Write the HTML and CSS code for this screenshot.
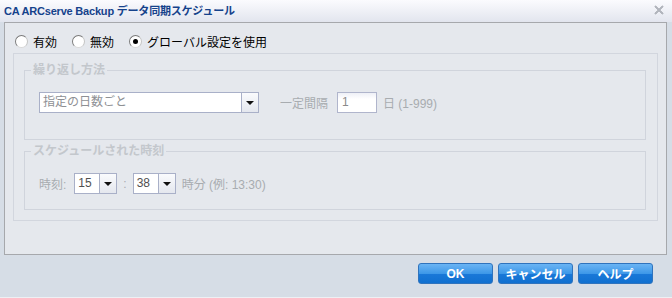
FILE: index.html
```html
<!DOCTYPE html>
<html lang="ja">
<head>
  <meta charset="UTF-8">
  <title>CA ARCserve Backup データ同期スケジュール</title>
  <link rel="stylesheet" href="styles.css">
</head>
<body>
  <div class="window">
    <div class="titlebar">
      <span class="title">CA ARCserve Backup データ同期スケジュール</span>
      <svg class="close" width="10" height="10" viewBox="0 0 10 10">
        <path d="M1 1 L9 9 M9 1 L1 9" stroke="#8a8e96" stroke-width="1.6" fill="none"/>
        <path d="M1 1 L9 9 M9 1 L1 9" stroke="#d8dce4" stroke-width="0.5" fill="none"/>
      </svg>
    </div>

    <div class="panel">
      <div class="radios">
        <label class="radio"><span class="dot"></span>有効</label>
        <label class="radio"><span class="dot"></span>無効</label>
        <label class="radio"><span class="dot checked"></span>グローバル設定を使用</label>
      </div>

      <div class="outer">
        <fieldset class="group">
          <legend>繰り返し方法</legend>
          <div class="row">
            <div class="combo wide">
              <span class="combo-text">指定の日数ごと</span>
              <span class="combo-btn"><i class="arrow"></i></span>
            </div>
            <span class="muted gap-l">一定間隔</span>
            <span class="field">1</span>
            <span class="muted">日 (1-999)</span>
          </div>
        </fieldset>

        <fieldset class="group second">
          <legend>スケジュールされた時刻</legend>
          <div class="row">
            <span class="muted">時刻:</span>
            <div class="combo small hour">
              <span class="combo-text">15</span>
              <span class="combo-btn"><i class="arrow"></i></span>
            </div>
            <span class="muted colon">:</span>
            <div class="combo small">
              <span class="combo-text">38</span>
              <span class="combo-btn"><i class="arrow"></i></span>
            </div>
            <span class="muted">時分 (例: 13:30)</span>
          </div>
        </fieldset>
      </div>
    </div>

    <div class="buttons">
      <button>OK</button>
      <button>キャンセル</button>
      <button>ヘルプ</button>
    </div>
  </div>
</body>
</html>
```

FILE: styles.css
```css
body {
  margin: 0;
  background: #d6dde6;
  font-family: "Liberation Sans", "Noto Sans CJK JP", sans-serif;
  font-size: 12px;
}

.window {
  width: 672px;
  height: 297px;
  border-bottom: 1px solid #eef0f4;
}

.titlebar {
  height: 22px;
  display: flex;
  align-items: center;
  justify-content: space-between;
  padding: 0 8px 0 4px;
  background: linear-gradient(#fbfbfe, #e2e5ee);
}

.title {
  font-weight: bold;
  font-size: 11px;
  letter-spacing: -0.2px;
  color: #15428b;
  margin-top: -2px;
}

.close {
  margin-top: -2px;
}

.panel {
  margin-left: 4px;
  width: 661px;
  height: 231px;
  border: 1px solid #a6a8ac;
  background: #e5e8ed;
}

.radios {
  display: flex;
  align-items: center;
  height: 16px;
  padding: 10px 0 0 10px;
}

.radio {
  display: flex;
  align-items: center;
  margin-right: 15px;
  color: #000;
}

.dot {
  width: 11px;
  height: 11px;
  border-radius: 50%;
  border: 1px solid #8c8c8c;
  border-color: #7a7a7a #c4c4c4 #d8d8d8 #7a7a7a;
  background: #fff;
  margin-right: 5px;
  position: relative;
}

.dot.checked::after {
  content: "";
  position: absolute;
  left: 3px;
  top: 3px;
  width: 5px;
  height: 5px;
  border-radius: 50%;
  background: #000;
}

.outer {
  margin: 4px 0 0 8px;
  width: 643px;
  height: 157px;
  border: 1px solid #d2d6de;
  padding-top: 9px;
  box-sizing: content-box;
}

.group {
  margin: 0 0 0 10px;
  width: 592px;
  border: 1px solid #d0d4dc;
  padding: 15px 14px 26px 14px;
}

.group.second {
  margin-top: 4px;
  padding-bottom: 15px;
}

.group legend {
  margin-left: -8px;
  padding: 0 2px;
  font-weight: bold;
  color: #c3c7cc;
  font-size: 12px;
  line-height: 14px;
}

.row {
  display: flex;
  align-items: center;
  height: 21px;
}

.muted {
  color: #a8acb0;
}

.gap-l {
  margin-left: 21px;
  margin-right: 9px;
}

.combo {
  display: flex;
  height: 21px;
  box-sizing: border-box;
  border: 1px solid #a9b0c8;
  background: #fff;
}

.combo.wide {
  width: 220px;
}

.combo.small {
  width: 43px;
  margin-right: 6px;
}

.combo.hour {
  margin: 0 0 0 8px;
}

.combo-text {
  flex: 1;
  padding-left: 3px;
  line-height: 19px;
  color: #8e9094;
}

.combo.small .combo-text {
  color: #505050;
}

.combo-btn {
  width: 16px;
  border-left: 1px solid #a9b0c8;
  background: linear-gradient(#fafbfd, #e4e7ee);
  display: flex;
  align-items: center;
  justify-content: center;
}

.arrow {
  width: 0;
  height: 0;
  border-left: 4px solid transparent;
  border-right: 4px solid transparent;
  border-top: 4px solid #111;
}

.colon {
  margin: 0 6px 0 6px;
}

.field {
  width: 40px;
  height: 21px;
  box-sizing: border-box;
  border: 1px solid #b0b5cc;
  background: linear-gradient(#eef0f6, #fff 6px);
  padding-left: 4px;
  line-height: 19px;
  color: #8a8a8a;
  margin-right: 6px;
}

.buttons {
  display: flex;
  justify-content: flex-end;
  gap: 5px;
  padding: 8px 19px 0 0;
}

.buttons button {
  width: 75px;
  height: 21px;
  border: 1px solid #2f73bd;
  border-radius: 3px;
  background: linear-gradient(#6ab4f4, #3e98e8 50%, #1a78d8 51%, #1070d0);
  color: #fff;
  font-weight: bold;
  font-size: 12px;
  font-family: "Liberation Sans", "Noto Sans CJK JP", sans-serif;
  padding: 0;
}
```
